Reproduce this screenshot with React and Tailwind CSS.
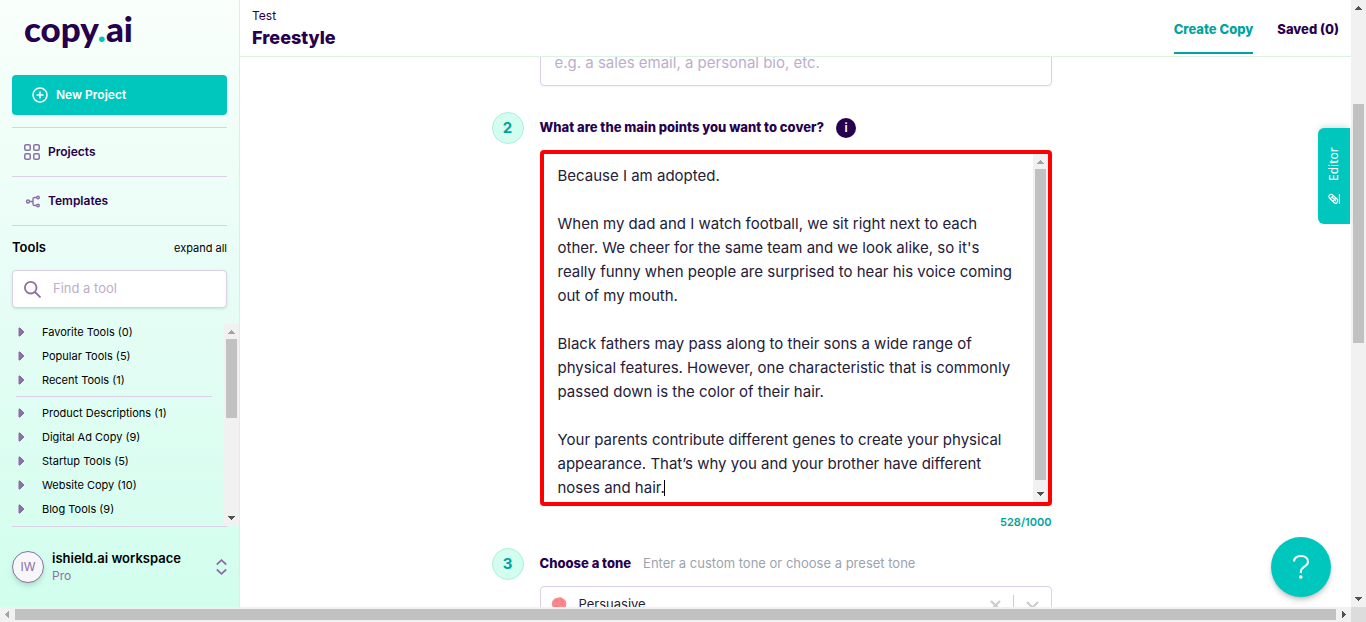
import React from "react";

const text = `Because I am adopted.

When my dad and I watch football, we sit right next to each other. We cheer for the same team and we look alike, so it's really funny when people are surprised to hear his voice coming out of my mouth.

Black fathers may pass along to their sons a wide range of physical features. However, one characteristic that is commonly passed down is the color of their hair.

Your parents contribute different genes to create your physical appearance. That’s why you and your brother have different noses and hair.`;

const recentGroups = ["Favorite Tools (0)", "Popular Tools (5)", "Recent Tools (1)"];
const toolGroups = [
  "Product Descriptions (1)",
  "Digital Ad Copy (9)",
  "Startup Tools (5)",
  "Website Copy (10)",
  "Blog Tools (9)",
];

const arrowPaths = {
  up: "M4 10h7v-1h-1v-1h-1v-1h-1v-1h-1v1h-1v1h-1v1h-1z",
  down: "M4 5h7v1h-1v1h-1v1h-1v1h-1v-1h-1v-1h-1v-1h-1z",
  left: "M9 4v7h-1v-1h-1v-1h-1v-1h-1v-1h1v-1h1v-1h1v-1z",
  right: "M6 4v7h1v-1h1v-1h1v-1h1v-1h-1v-1h-1v-1h-1v-1z",
};

function Arrow({ dir, muted }) {
  return (
    <svg className="size-[15px] shrink-0" viewBox="0 0 15 15" shapeRendering="crispEdges" aria-hidden="true">
      <path d={arrowPaths[dir]} fill={muted ? "#a3a3a3" : "#505050"} />
    </svg>
  );
}

function VerticalScrollbar({ before, size, after, mutedUp }) {
  return (
    <div className="flex w-[15px] shrink-0 flex-col bg-[#f1f1f1]" aria-hidden="true">
      <Arrow dir="up" muted={mutedUp} />
      <div className="flex min-h-0 flex-1 flex-col items-center">
        <div style={{ flexGrow: before }} />
        <div className="w-[11px] bg-[#c1c1c1]" style={{ flexGrow: size }} />
        <div style={{ flexGrow: after }} />
      </div>
      <Arrow dir="down" />
    </div>
  );
}

function ToolGroup({ label }) {
  return (
    <li>
      <button type="button" className="flex h-6 w-full items-center text-left text-[11px] text-black">
        <svg className="ml-[18px] mr-[17px] h-[10px] w-[7px]" viewBox="0 0 7 10" aria-hidden="true">
          <path d="M1 1H2L6 5L2 9H1Z" fill="#8c6fa3" stroke="#8c6fa3" strokeWidth="1" strokeLinejoin="round" />
        </svg>
        {label}
      </button>
    </li>
  );
}

function Sidebar() {
  return (
    <aside className="flex w-60 shrink-0 flex-col border-r border-[#dcefe6] bg-linear-to-b from-[#f9fffb] via-[#e6fdf5] to-[#d1feed]">
      <a href="#home" className="ml-6 mt-1 h-[71px] font-[Lato,sans-serif] text-[35px] leading-[48px] font-black text-[#26004d]">
        copy<span className="text-[#00c5bd]">.</span>ai
      </a>
      <button type="button" className="mx-3 flex h-10 shrink-0 items-center gap-2 rounded-[4px] bg-[#00c7be] pl-5 text-xs font-semibold text-white">
        <svg className="size-4" viewBox="0 0 16 16" fill="none" stroke="white" strokeWidth="1.500" strokeLinecap="round" aria-hidden="true">
          <circle cx="8" cy="8" r="7" />
          <path d="M8 5v6M5 8h6" />
        </svg>
        New Project
      </button>
      <nav className="mx-3 mt-3 text-xs font-semibold text-[#26004d]">
        <a href="#projects" className="flex h-[49px] items-center gap-2 border-t border-[#dccfe8] pl-3">
          <svg className="size-4" viewBox="0 0 16 16" fill="none" stroke="#8c6fa3" strokeWidth="1.500" aria-hidden="true">
            <rect x="0.750" y="0.750" width="5.500" height="5.500" rx="1.500" />
            <rect x="9.750" y="0.750" width="5.500" height="5.500" rx="1.500" />
            <rect x="0.750" y="9.750" width="5.500" height="5.500" rx="1.500" />
            <rect x="9.750" y="9.750" width="5.500" height="5.500" rx="1.500" />
          </svg>
          Projects
        </a>
        <a href="#templates" className="flex h-[50px] items-center gap-2 border-y border-[#dccfe8] pl-3">
          <svg className="size-4" viewBox="0 0 16 16" fill="none" stroke="#8c6fa3" strokeWidth="1.400" aria-hidden="true">
            <circle cx="4" cy="8.500" r="1.500" />
            <path d="M5.500 8.500H9M13 4.500H10.500Q9 4.500 9 6V11Q9 12.500 10.500 12.500H13" />
            <circle cx="14" cy="4.500" r="1.300" />
            <circle cx="14" cy="12.500" r="1.300" />
          </svg>
          Templates
        </a>
      </nav>
      <div className="mx-3 flex h-11 shrink-0 items-center justify-between text-black">
        <h2 className="text-[13px] font-semibold">Tools</h2>
        <button type="button" className="text-[11px]">expand all</button>
      </div>
      <label className="mx-3 flex h-[38px] shrink-0 items-center gap-3 rounded-[4px] border border-[#dccfe8] bg-white pl-[11px] shadow-sm shadow-emerald-900/10">
        <svg className="size-[17px] shrink-0" viewBox="0 0 17 17" fill="none" stroke="#8c6fa3" strokeWidth="1.800" aria-hidden="true">
          <circle cx="6.700" cy="6.700" r="5.800" />
          <path d="M11 11l5.500 5.500" />
        </svg>
        <input type="search" aria-label="Find a tool" placeholder="Find a tool" className="w-full min-w-0 bg-transparent text-[13px] outline-none placeholder:text-[#bcaecb]" />
      </label>
      <div className="mt-4 flex min-h-0 flex-1">
        <div className="min-w-0 flex-1 overflow-hidden">
          <div className="-mt-1">
            <ul>{recentGroups.map((g) => <ToolGroup key={g} label={g} />)}</ul>
            <hr className="my-1 mr-3 ml-4 border-[#dccfe8]" />
            <ul>{toolGroups.map((g) => <ToolGroup key={g} label={g} />)}</ul>
          </div>
        </div>
        <VerticalScrollbar before={0} size={79} after={93} mutedUp />
      </div>
      <div className="mx-3 flex h-[81px] shrink-0 items-center gap-2 border-t border-[#dccfe8]">
        <span className="flex size-8 items-center justify-center rounded-full border border-[#8c6fa3] bg-[#f7f7f9] text-xs text-[#8c6fa3] shadow-md shadow-emerald-900/15">IW</span>
        <div className="flex-1">
          <p className="text-[13px] leading-[18px] font-semibold text-black">ishield.ai workspace</p>
          <p className="text-xs leading-[18px] text-[#8c6fa3]">Pro</p>
        </div>
        <button type="button" aria-label="Switch workspace">
          <svg className="h-4 w-[11px]" viewBox="0 0 11 16" fill="none" stroke="#8c6fa3" strokeWidth="1.800" aria-hidden="true">
            <path d="M.8 5.500L5.500 1.200L10.200 5.500M.8 10.500L5.500 14.800L10.200 10.500" />
          </svg>
        </button>
      </div>
    </aside>
  );
}

function Step({ n }) {
  return (
    <span className="flex size-8 shrink-0 items-center justify-center rounded-full border border-[#aeeee0] bg-[#d3fdee] text-[15px] font-bold text-[#00a39d]">
      {n}
    </span>
  );
}

function MainPanel() {
  return (
    <main className="relative flex min-w-0 flex-1 flex-col bg-white">
      <header className="flex h-[57px] shrink-0 justify-between border-b border-[#dcf3e4] px-3">
        <div className="pt-2 text-[#26004d]">
          <p className="text-xs leading-4">Test</p>
          <h1 className="text-lg leading-7 font-extrabold">Freestyle</h1>
        </div>
        <nav className="flex h-[54px] gap-6 text-[13px] font-extrabold">
          <a href="#create" className="flex items-center border-b-2 border-[#00a39d] pt-2 text-[#00a39d]">Create Copy</a>
          <a href="#saved" className="flex items-center border-b-2 border-transparent pt-2 text-[#26004d]">Saved (0)</a>
        </nav>
      </header>
      <div className="min-h-0 flex-1 overflow-hidden pr-12">
        <form className="mx-auto -mt-[17px] w-[560px]" onSubmit={(e) => e.preventDefault()}>
          <div className="pl-12">
            <input type="text" aria-label="What do you want to create?" placeholder="e.g. a sales email, a personal bio, etc." className="h-[46px] w-full rounded-[4px] border border-[#dccfe8] px-3.5 pb-0.5 text-[15px] shadow-sm shadow-teal-900/5 outline-none placeholder:text-[#bcaecb]" />
          </div>
          <div className="mt-[26px] flex items-center gap-4">
            <Step n="2" />
            <label htmlFor="points" className="text-[13px] font-extrabold text-[#26004d]">What are the main points you want to cover?</label>
            <button type="button" aria-label="More information" className="-ml-1 flex size-5 items-center justify-center rounded-full bg-[#26004d] text-xs font-semibold text-white">i</button>
          </div>
          <div className="relative mt-1.5 ml-12 flex h-[356px] overflow-hidden rounded-[4px] border-4 border-[#ff0000] shadow-sm shadow-teal-900/5">
            <textarea id="points" defaultValue={text} className="min-w-0 flex-1 resize-none overflow-hidden bg-white px-3.5 pt-[10px] text-[15px] leading-6 text-[#242038] outline-none" />
            <VerticalScrollbar before={0} size={311} after={7} mutedUp />
            <span className="absolute top-[326px] left-[120px] h-4 w-px bg-black" aria-hidden="true" />
          </div>
          <p className="mt-2 text-right text-[11px] leading-4 font-semibold text-[#00a39d]">528/1000</p>
          <div className="mt-[18px] flex items-center gap-4">
            <Step n="3" />
            <label htmlFor="tone" className="-mr-1 text-[13px] font-extrabold text-[#26004d]">Choose a tone</label>
            <span className="text-[13px] text-[#9ca3af]">Enter a custom tone or choose a preset tone</span>
          </div>
          <div className="mt-1.5 ml-12 flex h-[38px] items-center rounded-[4px] border border-[#dccfe8] pr-3 pl-[10px]">
            <svg className="size-4 shrink-0" viewBox="0 0 16 16" aria-hidden="true">
              <path d="M1 7.500C0.500 4 3 1 6 1C8 0 11 0 12.500 2C15 3 16 6 15 8.500C15.500 11 13 12 11.500 11.500L10 15H8L7.500 12C4 13 1 11 1 7.500Z" fill="#fa8b91" />
              <path d="M3 5q2 0 2-2M7 2q1 3-2 5M10 2q0 3 3 3M8 7q3-1 5 2M3 9q3-1 5 1" fill="none" stroke="#f0717c" strokeWidth=".8" />
            </svg>
            <select id="tone" defaultValue="Persuasive" className="ml-3 min-w-0 flex-1 appearance-none bg-transparent text-[13px] text-[#242038] outline-none">
              <option>Persuasive</option>
            </select>
            <button type="button" aria-label="Clear tone" className="mr-3">
              <svg className="size-[11px]" viewBox="0 0 11 11" stroke="#cccccc" strokeWidth="2.200" aria-hidden="true"><path d="M1 1l9 9M10 1L1 10" /></svg>
            </button>
            <span className="h-5 w-px bg-[#cccccc]" />
            <svg className="ml-3 h-[8px] w-[13px]" viewBox="0 0 13 8" fill="none" stroke="#cccccc" strokeWidth="2.200" aria-hidden="true"><path d="M1 1l5.500 5.500L12 1" /></svg>
          </div>
        </form>
      </div>
      <button type="button" className="absolute top-32 right-px flex h-24 w-8 rotate-180 items-center justify-center gap-3 rounded-r-md bg-[#00c7be] font-['Noto_Sans',sans-serif] text-xs text-white shadow-md shadow-teal-900/10 [writing-mode:vertical-rl]">
        <svg className="size-3" viewBox="0 0 12 12" fill="none" stroke="white" strokeWidth="1.100" aria-hidden="true">
          <path d="M.6 1v10M3.500 1.500L2.500 3.500Q2 5 3 6L7.500 10.200Q9 11.300 10.500 10Q11.800 8.500 10.500 7L6.500 3Q5 1.500 3.500 1.500ZM4.200 6.800L7 4M6.800 9.300L9.500 6.600M4 4L8 8" />
        </svg>
        Editor
      </button>
      <button type="button" aria-label="Help" className="absolute right-5 bottom-2.5 flex size-[60px] items-center justify-center rounded-full bg-[#00c7be] shadow-md shadow-black/20">
        <svg className="h-6 w-4" viewBox="0 0 16 24" fill="none" stroke="white" strokeWidth="2" aria-hidden="true">
          <path d="M1 6.500C1.300 3 4 1 8 1C12 1 15 3.300 15 7C15 11.500 7.800 11.500 7.800 17V18" />
          <circle cx="7.800" cy="22" r="1.800" fill="white" stroke="none" />
        </svg>
      </button>
    </main>
  );
}

export default function App() {
  return (
    <div className="flex h-screen flex-col overflow-hidden font-[Inter,sans-serif]">
      <div className="flex min-h-0 flex-1">
        <Sidebar />
        <MainPanel />
        <VerticalScrollbar before={89} size={239} after={249} />
      </div>
      <div className="flex h-[15px] shrink-0 bg-[#f1f1f1]" aria-hidden="true">
        <Arrow dir="left" muted />
        <div className="my-0.5 flex-1 bg-[#c1c1c1]" />
        <Arrow dir="right" />
        <div className="w-[15px] bg-[#dcdcdc]" />
      </div>
    </div>
  );
}
